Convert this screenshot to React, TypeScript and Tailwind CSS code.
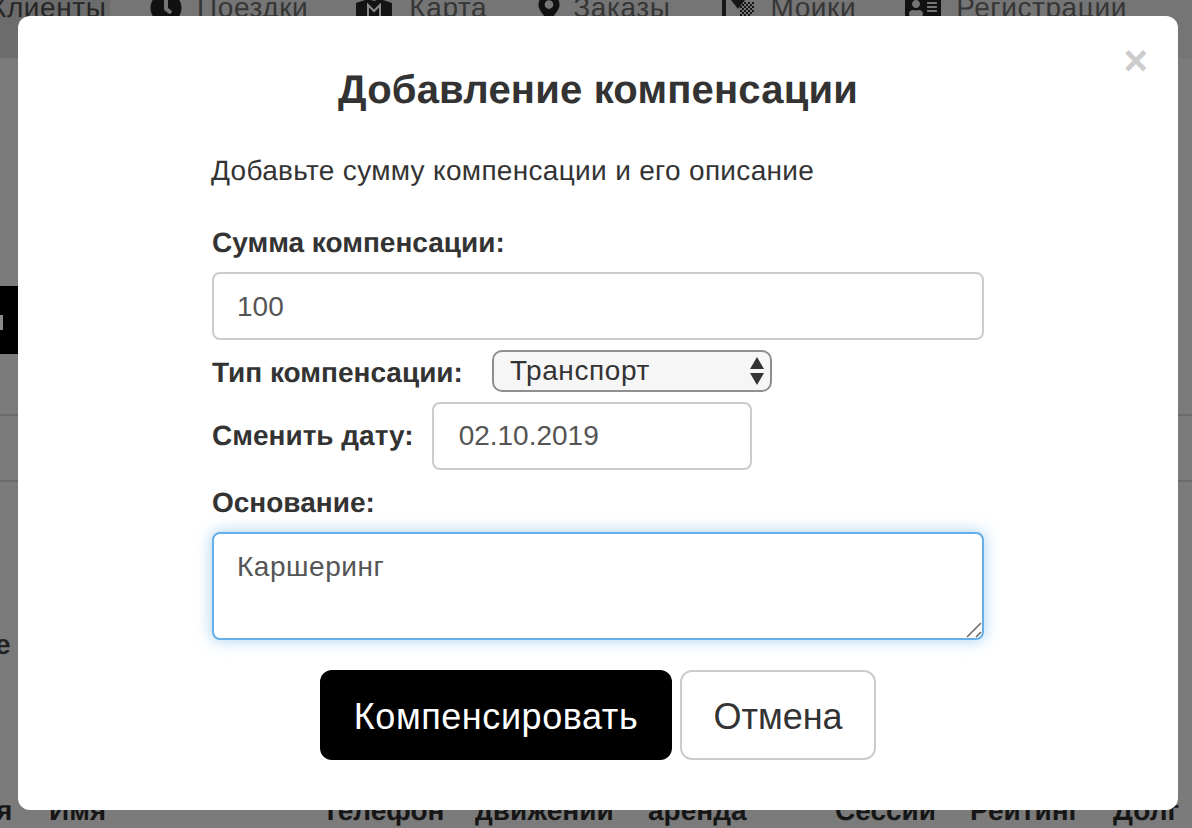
import { FaClock, FaMapMarkerAlt, FaAddressCard } from 'react-icons/fa';

const font = "font-['Liberation_Sans',Arial,sans-serif] [text-rendering:geometricPrecision]";

function MapIcon() {
  return (
    <svg width="36" height="32" viewBox="0 0 36 32">
      <path d="M0 11L12 7l6 2 6-2 12 4v21H0z" fill="#141414" />
      <path d="M12 26V13l6 6 6-6v13" fill="none" stroke="#8a8a8a" strokeWidth="2" />
    </svg>
  );
}

function WashIcon() {
  const dots: [number, number][] = [];
  for (let y = 10; y < 24; y += 2) {
    for (let x = 18; x < 32; x += 2) {
      if ((x + y) % 4 === 0 && x + y < 50 && x + y > 30) dots.push([x, y]);
    }
  }
  return (
    <svg width="36" height="32" viewBox="0 0 36 32">
      <rect x="0" y="0" width="4" height="32" fill="#161616" />
      <path d="M9 8h14l-7 9z" fill="#161616" />
      {dots.map(([x, y]) => (
        <rect key={`${x}-${y}`} x={x} y={y} width="2" height="2" fill="#161616" />
      ))}
    </svg>
  );
}

function Background() {
  return (
    <div className="flex flex-col">
      {/* Top nav, mostly hidden behind the dialog */}
      <div className="h-[58px] bg-[linear-gradient(90deg,#6c6c6c_110px,#757575_110px)] overflow-hidden">
        <div className="flex items-center -mt-[9px] h-[34px] text-[28px] leading-[34px] tracking-[0.6px] text-[#363636] whitespace-nowrap">
          <span className="-ml-[10px] w-[120px] text-[#262626]">Клиенты</span>
          <span className="ml-[40px] text-[#111111]"><FaClock size={32} /></span>
          <span className="ml-[15px]">Поездки</span>
          <span className="ml-[48px]"><MapIcon /></span>
          <span className="ml-[17px]">Карта</span>
          <span className="ml-[48px] text-[#111111]"><FaMapMarkerAlt size={28} /></span>
          <span className="ml-[10px]">Заказы</span>
          <span className="ml-[52px]"><WashIcon /></span>
          <span className="ml-[12px]">Моики</span>
          <span className="ml-[49px] text-[#111111]"><FaAddressCard size={36} /></span>
          <span className="ml-[15px]">Регистрации</span>
        </div>
      </div>

      <div className="mt-[228px] w-[40px] h-[68px] bg-black overflow-hidden">
        <div className="mt-[29px] w-[3px] h-[15px] bg-[#8a8a8a]" />
      </div>
      <div className="mt-[60px] h-[2px] bg-[#6a6a6a]" />
      <div className="mt-[64px] h-[2px] bg-[#6a6a6a]" />
      <div className="mt-[146px] -ml-[5px] text-[28px] leading-[34px] font-bold text-[#222222]">е</div>

      {/* Table header sticking out below the dialog */}
      <div className="mt-[132px] flex text-[28px] leading-[34px] font-bold text-[#161616] whitespace-nowrap">
        <span className="-ml-[4px] w-[53px]">я</span>
        <span className="w-[273px]">Имя</span>
        <span className="w-[153px]">Телефон</span>
        <span className="w-[173px]">движений</span>
        <span className="w-[187px]">аренда</span>
        <span className="w-[135px]">Сессии</span>
        <span className="w-[143px]">Рейтинг</span>
        <span>Долг</span>
      </div>
    </div>
  );
}

export default function App() {
  return (
    <div className={`relative w-[1192px] h-[828px] overflow-hidden bg-[#7b7b7b] ${font}`}>
      <Background />

      {/* Dialog */}
      <div className="absolute left-[18px] top-[16px] w-[1160px] h-[794px] bg-white rounded-[12px] text-[#333333]">
        <button className="absolute right-[30px] top-[21px] text-[42px] leading-[48px] font-bold text-[#cccccc]">×</button>

        <h4 className="pt-[50px] text-center text-[40px] leading-[48px] tracking-[0.18px] font-bold">Добавление компенсации</h4>

        <div className="mx-auto w-[772px] mt-[40px] flex flex-col">
          <p className="-ml-[1px] text-[28px] leading-[34px] tracking-[0.32px]">Добавьте сумму компенсации и его описание</p>

          <label className="mt-[38px] text-[28px] leading-[34px] font-bold">Сумма компенсации:</label>
          <input
            readOnly
            value="100"
            className="mt-[12px] h-[68px] w-full pl-[23px] pr-[24px] pt-[2px] text-[28px] text-[#555555] bg-white border-2 border-[#cccccc] rounded-[8px] outline-none"
          />

          <div className="mt-[10px] flex items-center h-[42px]">
            <label className="pt-[3px] text-[28px] leading-[34px] font-bold">Тип компенсации:</label>
            <div className="relative ml-[29px]">
              <select className="appearance-none block w-[280px] h-[42px] pl-[16px] text-[28px] leading-[34px] tracking-[0.6px] text-[#333333] bg-[#f6f6f6] border-2 border-[#8f8f8f] rounded-[10px] outline-none">
                <option>Транспорт</option>
              </select>
              <svg className="absolute right-[7px] top-[7px]" width="16" height="28" viewBox="0 0 16 28">
                <path d="M8 0l7 12H1z M8 28L1 16h14z" fill="#333333" />
              </svg>
            </div>
          </div>

          <div className="mt-[10px] flex items-center h-[68px]">
            <label className="text-[28px] leading-[34px] font-bold">Сменить дату:</label>
            <input
              readOnly
              value="02.10.2019"
              className="ml-[18px] h-[68px] w-[320px] px-[25px] text-[28px] text-[#555555] bg-white border-2 border-[#cccccc] rounded-[8px] outline-none"
            />
          </div>

          <label className="mt-[16px] text-[28px] leading-[34px] font-bold">Основание:</label>
          <div className="relative mt-[12px]">
            <textarea
              readOnly
              value="Каршеринг"
              className="block h-[108px] w-full pl-[23px] pr-[24px] pt-[13px] pb-[11px] text-[28px] leading-[40px] tracking-[0.55px] text-[#555555] bg-white border-2 border-[#66afe9] rounded-[8px] outline-none resize-none shadow-[0_0_16px_rgba(102,175,233,0.6)]"
            />
            <svg className="absolute right-[2px] bottom-[2px]" width="16" height="16" viewBox="0 0 16 16">
              <path d="M1 15L15 1M10 15l5-5" stroke="#666666" strokeWidth="1.5" />
            </svg>
          </div>

          <div className="mt-[30px] flex justify-center gap-[8px]">
            <button className="h-[90px] w-[352px] pt-[3px] bg-black text-white text-[36px] tracking-[0.57px] rounded-[12px]">Компенсировать</button>
            <button className="h-[90px] w-[196px] pt-[3px] bg-white text-[#333333] text-[36px] border-2 border-[#cccccc] rounded-[12px]">Отмена</button>
          </div>
        </div>
      </div>
    </div>
  );
}
